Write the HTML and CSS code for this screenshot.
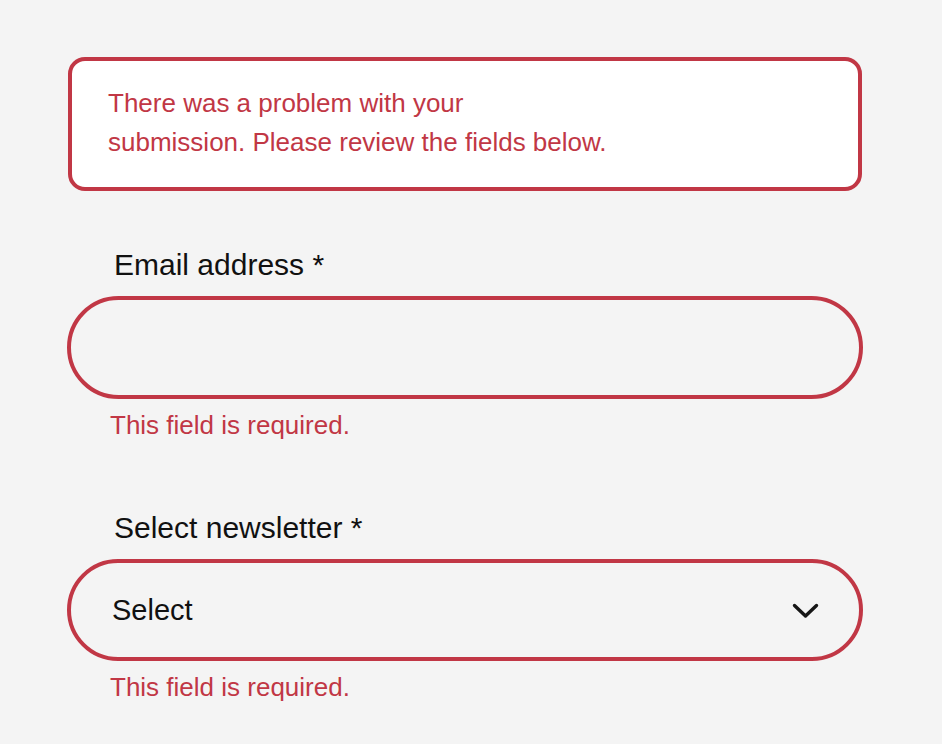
FILE: index.html
```html
<!DOCTYPE html>
<html lang="en">
<head>
<meta charset="utf-8">
<title>Newsletter form</title>
<link rel="stylesheet" href="styles.css">
</head>
<body>
<main class="form">
  <div class="alert" role="alert">There was a problem with your<br>submission. Please review the fields below.</div>

  <div class="field">
    <label class="label" for="email">Email address *</label>
    <input class="control" id="email" type="email">
    <p class="error">This field is required.</p>
  </div>

  <div class="field">
    <label class="label">Select newsletter *</label>
    <div class="control select">
      <span>Select</span>
      <svg class="chevron" width="27" height="16" viewBox="0 0 27 16" aria-hidden="true">
        <polyline points="2.5,2.5 13.5,13 24.5,2.5" fill="none" stroke="#161616" stroke-width="3.4" stroke-linecap="round" stroke-linejoin="round"/>
      </svg>
    </div>
    <p class="error">This field is required.</p>
  </div>
</main>
</body>
</html>
```

FILE: styles.css
```css
html, body {
  margin: 0;
  padding: 0;
  background: #f4f4f4;
}

body {
  font-family: "Liberation Sans", Arial, sans-serif;
  color: #111;
}

.form {
  width: 796px;
  margin-left: 67px;
  padding-top: 57px;
}

.alert {
  margin-left: 1px;
  width: 794px;
  box-sizing: border-box;
  background: #fff;
  border: 4px solid #c13745;
  border-radius: 17px;
  padding: 23px 36px 25px;
  color: #c13745;
  font-size: 26px;
  line-height: 39px;
}

.field {
  display: flex;
  flex-direction: column;
}

.alert + .field {
  margin-top: 56px;
}

.field + .field {
  margin-top: 65px;
}

.label {
  padding-left: 47px;
  font-size: 30px;
  line-height: 35px;
  color: #111;
}

.control {
  margin-top: 14px;
  box-sizing: border-box;
  width: 796px;
  height: 103px;
  border: 4px solid #c13745;
  border-radius: 52px;
  background: transparent;
  font-family: inherit;
  font-size: 29px;
  color: #111;
  outline: none;
}

input.control {
  display: block;
  padding: 0 42px;
}

.select {
  display: flex;
  align-items: center;
  justify-content: space-between;
  padding: 0 40px 0 41px;
  height: 102px;
}

.chevron {
  display: block;
  margin-top: 1px;
}

.error {
  margin: 7px 0 0;
  padding-left: 43px;
  color: #c13745;
  font-size: 26px;
  line-height: 39px;
}
```
